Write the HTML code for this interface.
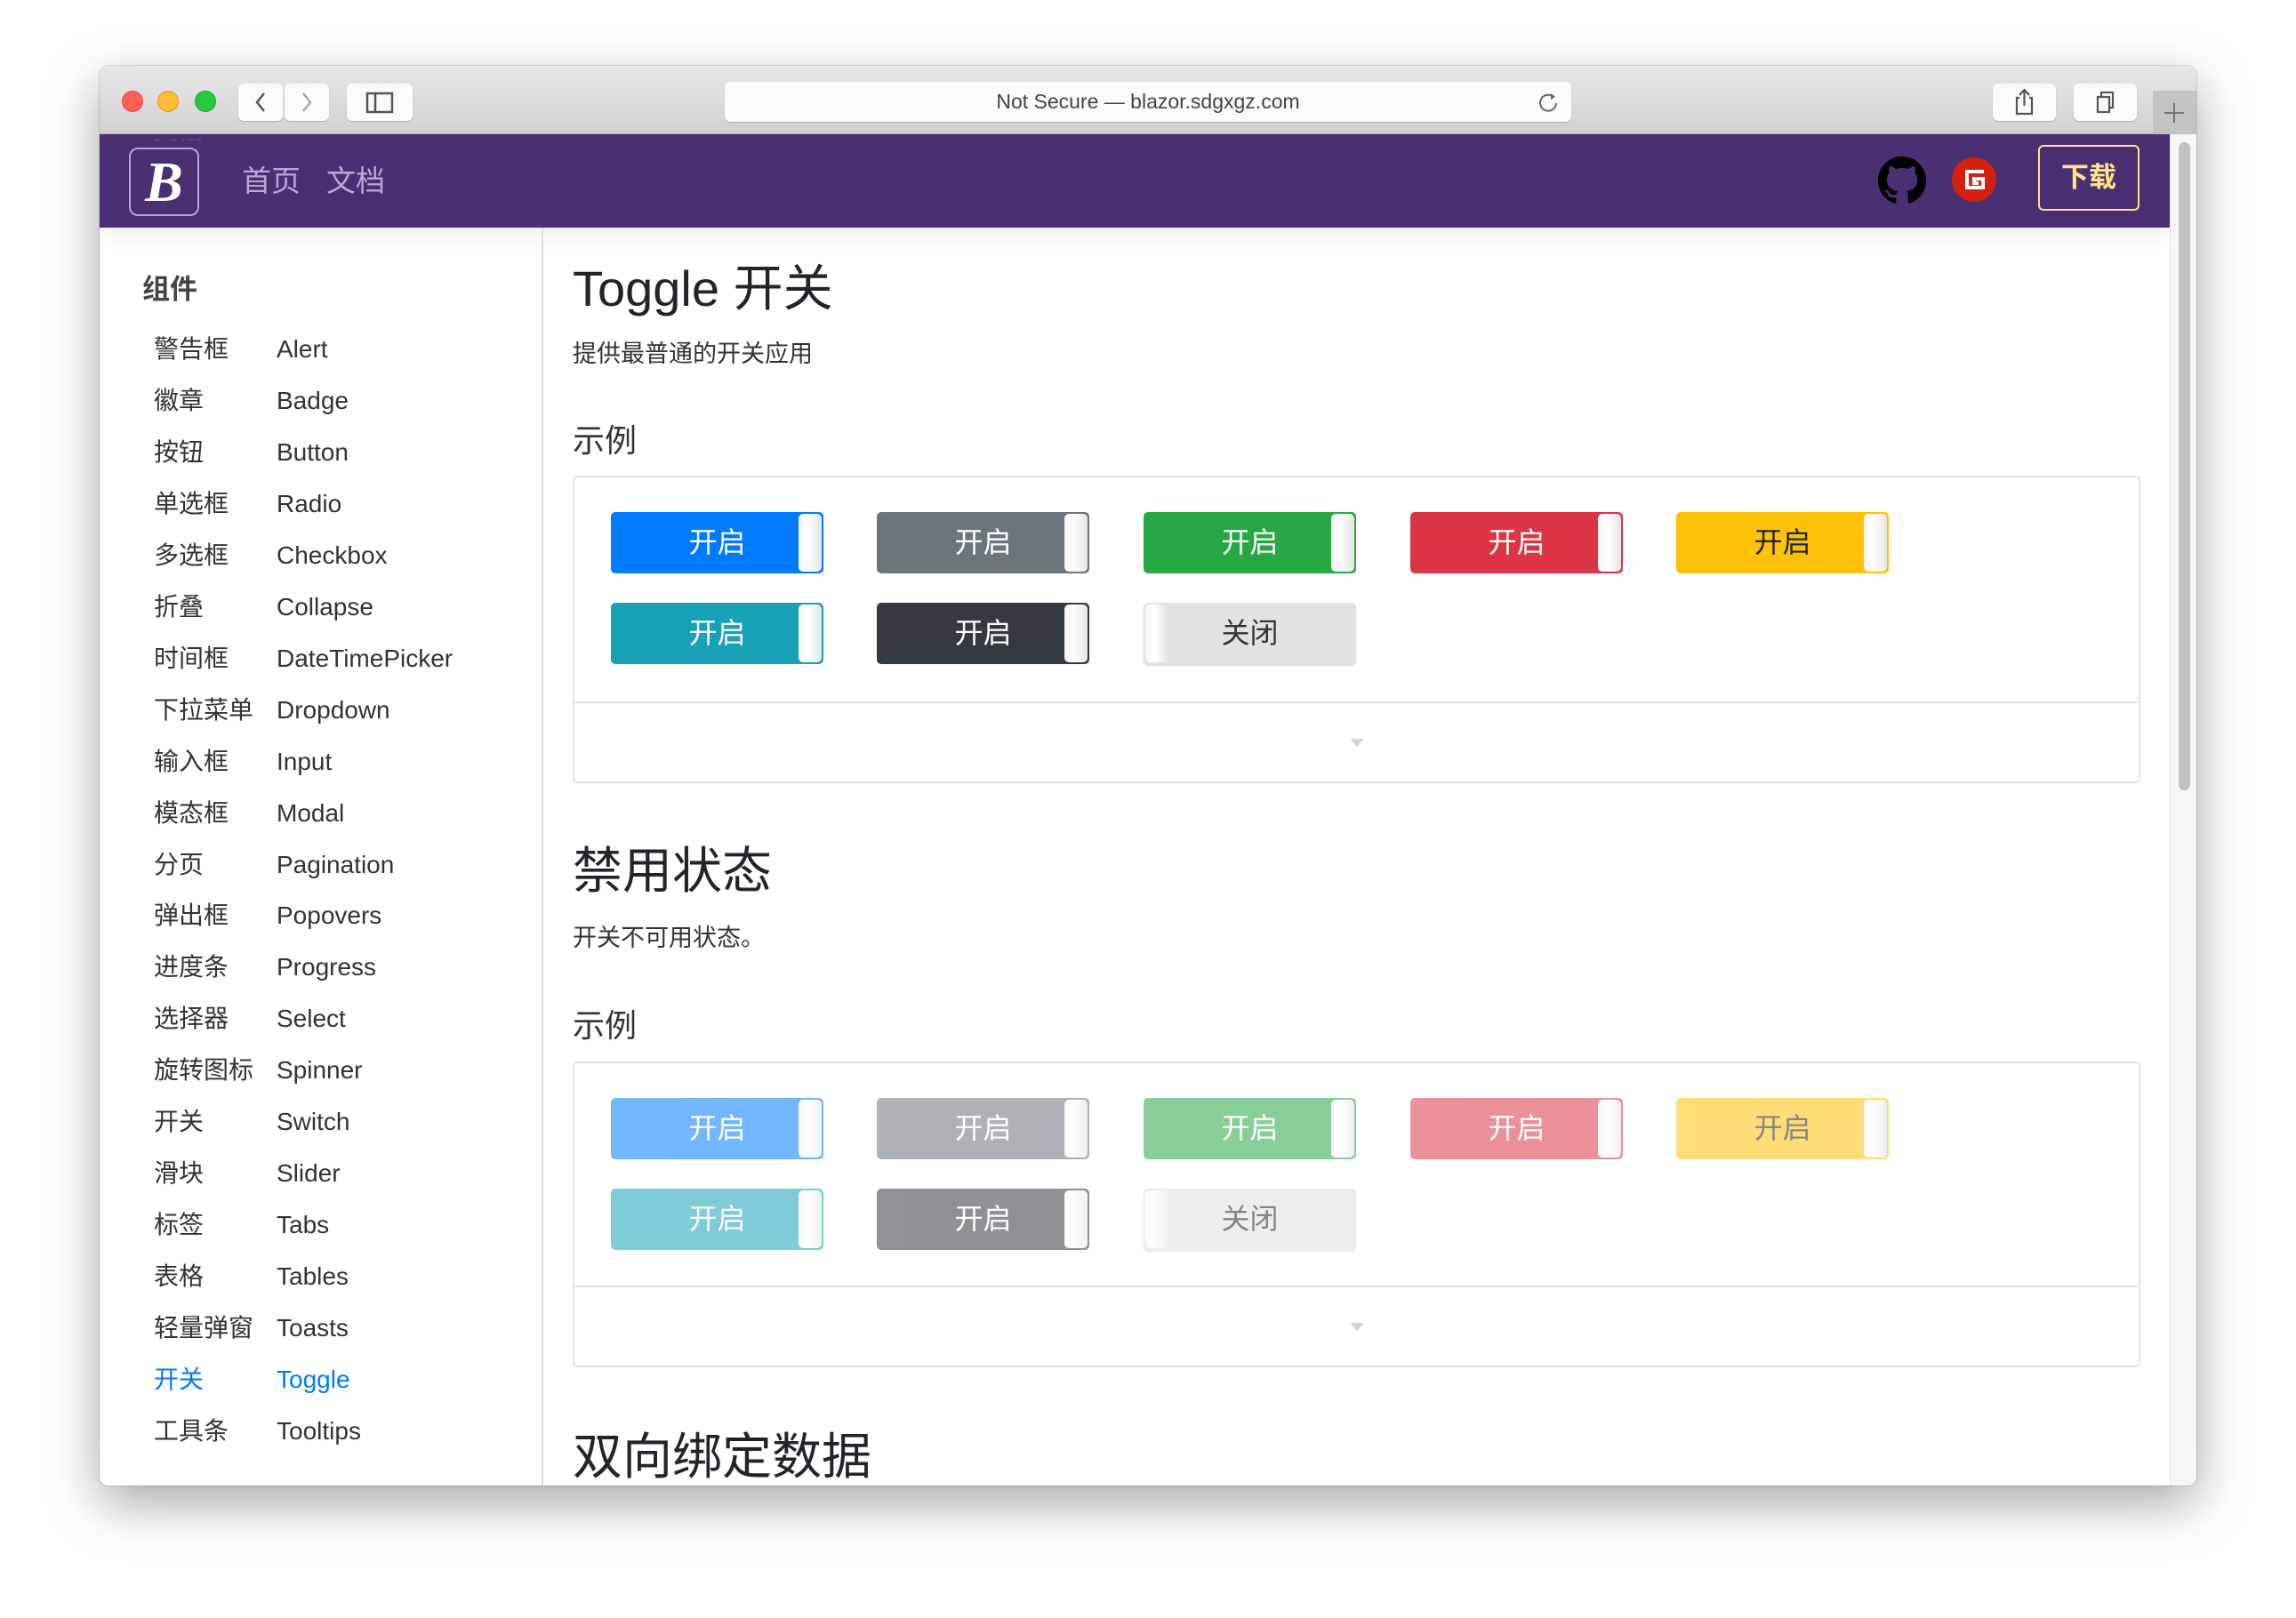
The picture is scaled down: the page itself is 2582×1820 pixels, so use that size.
<!DOCTYPE html>
<html><head><meta charset="utf-8"><style>
*{margin:0;padding:0;box-sizing:border-box}
body{width:2582px;height:1820px;background:#fff;position:relative;overflow:hidden;font-family:"Liberation Sans","Noto Sans CJK SC",sans-serif}
.a{position:absolute}
.win{left:112px;top:74px;width:2358px;height:1597px;border-radius:10px;overflow:hidden;box-shadow:0 20px 60px rgba(0,0,0,.35),0 0 0 1px rgba(0,0,0,.12);background:#fff}
.tb{left:0;top:0;width:2358px;height:77px;background:linear-gradient(#e8e6e8,#d3d1d3);border-bottom:1px solid #b8b8b8}
.btn{background:#fbfbfb;border-radius:6px;box-shadow:0 1px 1px rgba(0,0,0,.2)}
.nav{left:0;top:77px;width:2328px;height:105px;background:#4a2f73;box-shadow:0 8px 20px rgba(0,0,0,.08)}
.side{left:0;top:182px;width:499px;height:1415px;border-right:2px solid #ddd}
.si{position:absolute;font-size:28px;color:#333;line-height:40px;white-space:nowrap}
.t{position:absolute;width:239px;height:69px;border-radius:5px;color:#fff;font-size:32px;line-height:69px;text-align:center}
.t::after{content:"";position:absolute;right:2px;top:2px;width:26px;height:65px;border-radius:5px;background:linear-gradient(90deg,#f4f4f4,#fff 40%,#e4e4e4)}
.t.off{background:#e2e2e2;color:#333;box-shadow:0 2px 2px rgba(0,0,0,.15)}
.t.off::after{right:auto;left:2px}
.card{border:2px solid #e2e4e7;border-radius:6px}
.dis .t{opacity:.55}
.dis .t.off{opacity:.6}
</style></head><body>
<div class="a win">
 <div class="a tb">
  <div class="a" style="left:25px;top:28px;width:24px;height:24px;border-radius:50%;background:#fd5f57;border:1px solid #de4a42"></div>
  <div class="a" style="left:65px;top:28px;width:24px;height:24px;border-radius:50%;background:#fdbc2e;border:1px solid #dd9e22"></div>
  <div class="a" style="left:107px;top:28px;width:24px;height:24px;border-radius:50%;background:#28c840;border:1px solid #1aab2f"></div>
  <div class="a btn" style="left:156px;top:20px;width:50px;height:42px"><svg width="50" height="42"><path d="M29 11 L21 21 L29 31" fill="none" stroke="#555" stroke-width="2.5"/></svg></div>
  <div class="a btn" style="left:208px;top:20px;width:50px;height:42px"><svg width="50" height="42"><path d="M21 11 L29 21 L21 31" fill="none" stroke="#aaa" stroke-width="2.5"/></svg></div>
  <div class="a btn" style="left:278px;top:20px;width:74px;height:42px"><svg width="74" height="42"><rect x="23" y="11" width="28" height="21" fill="none" stroke="#555" stroke-width="2.5"/><line x1="32" y1="11" x2="32" y2="32" stroke="#555" stroke-width="2.5"/></svg></div>
  <div class="a btn" style="left:703px;top:18px;width:952px;height:45px;text-align:center;line-height:45px;font-size:23px;color:#444">Not Secure — blazor.sdgxgz.com
   <svg class="a" style="right:12px;top:9px" width="28" height="28"><path d="M20 8 A9 9 0 1 0 23 15" fill="none" stroke="#666" stroke-width="2"/><path d="M17 4 L22 8 L17 11" fill="#666"/></svg></div>
  <div class="a btn" style="left:2129px;top:20px;width:71px;height:42px"><svg width="71" height="42"><path d="M30 16 H27 V34 H44 V16 H41 M35.5 25 V8 M30 13 L35.5 7 L41 13" fill="none" stroke="#555" stroke-width="2.2"/></svg></div>
  <div class="a btn" style="left:2220px;top:20px;width:71px;height:42px"><svg width="71" height="42"><rect x="27" y="15" width="13" height="17" fill="none" stroke="#555" stroke-width="2.2"/><path d="M31 15 V10 H44 V27 H40" fill="none" stroke="#555" stroke-width="2.2"/></svg></div>
  <div class="a" style="left:2309px;top:28px;width:49px;height:49px;background:#c4c2c4"><svg width="49" height="49"><path d="M24 14 V36 M13 25 H35" stroke="#777" stroke-width="2"/></svg></div>
 </div>
 <div class="a nav">
  <div class="a" style="left:33px;top:15px;width:79px;height:77px;border:2px solid #b8a2d8;border-radius:10px;color:#fff;font-family:'Liberation Serif',serif;font-style:italic;font-weight:bold;font-size:64px;text-align:center;line-height:74px">B</div>
  <div class="a" style="left:160px;top:30px;font-size:33px;color:#b8a8d4;line-height:45px">首页</div>
  <div class="a" style="left:255px;top:30px;font-size:33px;color:#b8a8d4;line-height:45px">文档</div>
  <svg class="a" style="left:2000px;top:25px" width="54" height="54" viewBox="0 0 16 16"><path fill="#000" d="M8 0C3.58 0 0 3.580 0 8c0 3.54 2.29 6.53 5.47 7.59.4.07.55-.17.55-.38 0-.19-.01-.82-.01-1.49-2.01.37-2.530-.49-2.69-.94-.09-.23-.48-.94-.82-1.13-.28-.15-.68-.52-.01-.53.63-.01 1.08.58 1.23.82.72 1.21 1.87.87 2.33.66.07-.52.28-.87.51-1.07-1.78-.2-3.64-.89-3.64-3.95 0-.87.31-1.59.82-2.150-.08-.2-.36-1.02.08-2.12 0 0 .67-.21 2.2.82.64-.18 1.32-.27 2-.27.68 0 1.36.09 2 .27 1.53-1.04 2.2-.82 2.2-.82.44 1.1.16 1.92.08 2.12.51.56.82 1.27.82 2.15 0 3.07-1.87 3.75-3.65 3.95.29.25.54.73.54 1.48 0 1.07-.01 1.93-.01 2.2 0 .21.15.46.55.38A8.013 8.013 0 0016 8c0-4.42-3.58-8-8-8z"/></svg>
  <svg class="a" style="left:2082px;top:25px" width="52" height="52" viewBox="0 0 52 52"><circle cx="26" cy="26" r="25" fill="#d5200f"/><path d="M37 17 H18 V35 H36 V25 H26 V30 H31" fill="none" stroke="#fff" stroke-width="4"/></svg>
  <div class="a" style="left:2180px;top:12px;width:114px;height:74px;border:2px solid #ffe484;border-radius:6px;color:#ffe484;font-size:31px;font-weight:bold;text-align:center;line-height:70px">下载</div>
 </div>
 <div class="a" style="left:2328px;top:77px;width:30px;height:1520px;background:#f6f6f6;border-left:1px solid #e6e6e6"><div class="a" style="left:9px;top:9px;width:13px;height:729px;border-radius:7px;background:#c1c1c1"></div></div>
 <div class="a side">
  <div class="a" style="left:48px;top:48px;font-size:31px;font-weight:bold;color:#444;line-height:44px">组件</div>
 </div>
 <div id="sl"></div>
 <div class="a" style="left:532px;top:216px;font-size:56px;color:#212529;line-height:70px">Toggle 开关</div>
 <div class="a" style="left:532px;top:304px;font-size:27px;color:#333;line-height:40px">提供最普通的开关应用</div>
 <div class="a" style="left:532px;top:398px;font-size:36px;color:#333;line-height:48px">示例</div>
 <div class="a card" style="left:532px;top:461px;width:1763px;height:346px"><div class="a" style="left:0;top:252px;width:1759px;height:2px;background:#e2e4e7"></div><div class="a" style="left:872px;top:294px;width:0;height:0;border-left:8px solid transparent;border-right:8px solid transparent;border-top:9px solid #cfd3da"></div></div>
 <div class="a" style="left:532px;top:871px;font-size:56px;color:#212529;line-height:70px">禁用状态</div>
 <div class="a" style="left:532px;top:961px;font-size:27px;color:#333;line-height:40px">开关不可用状态。</div>
 <div class="a" style="left:532px;top:1056px;font-size:36px;color:#333;line-height:48px">示例</div>
 <div class="a card" style="left:532px;top:1120px;width:1763px;height:344px"><div class="a" style="left:0;top:250px;width:1759px;height:2px;background:#e2e4e7"></div><div class="a" style="left:872px;top:292px;width:0;height:0;border-left:8px solid transparent;border-right:8px solid transparent;border-top:9px solid #cfd3da"></div></div>
 <div class="a" style="left:532px;top:1530px;font-size:56px;color:#212529;line-height:70px">双向绑定数据</div>
 <div id="tg"></div>
</div>
<script>
var items=[["警告框","Alert"],["徽章","Badge"],["按钮","Button"],["单选框","Radio"],["多选框","Checkbox"],["折叠","Collapse"],["时间框","DateTimePicker"],["下拉菜单","Dropdown"],["输入框","Input"],["模态框","Modal"],["分页","Pagination"],["弹出框","Popovers"],["进度条","Progress"],["选择器","Select"],["旋转图标","Spinner"],["开关","Switch"],["滑块","Slider"],["标签","Tabs"],["表格","Tables"],["轻量弹窗","Toasts"],["开关","Toggle"],["工具条","Tooltips"]];
var h='<div class="si" style="left:60px;top:54px;color:#555;clip-path:inset(28px 0 0 0)">文档</div>';
items.forEach(function(it,i){var y=319+i*57.95-20;var c=i==20?'color:#007bff':'';h+='<div class="si" style="left:61px;top:'+y+'px;'+c+'">'+it[0]+'</div><div class="si" style="left:199px;top:'+y+'px;'+c+'">'+it[1]+'</div>';});
document.getElementById('sl').innerHTML=h;
var cols=['#007bff','#6c757d','#28a745','#dc3545','#ffc107'],cols2=['#17a2b8','#343a40'];
var xs=[575,874,1174,1474,1773];
function rows(y1,y2,cls){var s='<div class="'+cls+'">';cols.forEach(function(c,i){s+='<div class="t" style="left:'+xs[i]+'px;top:'+y1+'px;background:'+c+';'+(i==4?'color:#212529':'')+'">开启</div>';});
cols2.forEach(function(c,i){s+='<div class="t" style="left:'+xs[i]+'px;top:'+y2+'px;background:'+c+'">开启</div>';});
s+='<div class="t off" style="left:'+xs[2]+'px;top:'+y2+'px">关闭</div></div>';return s;}
document.getElementById('tg').innerHTML=rows(502,604,'')+rows(1161,1263,'dis');
</script>
</body></html>
